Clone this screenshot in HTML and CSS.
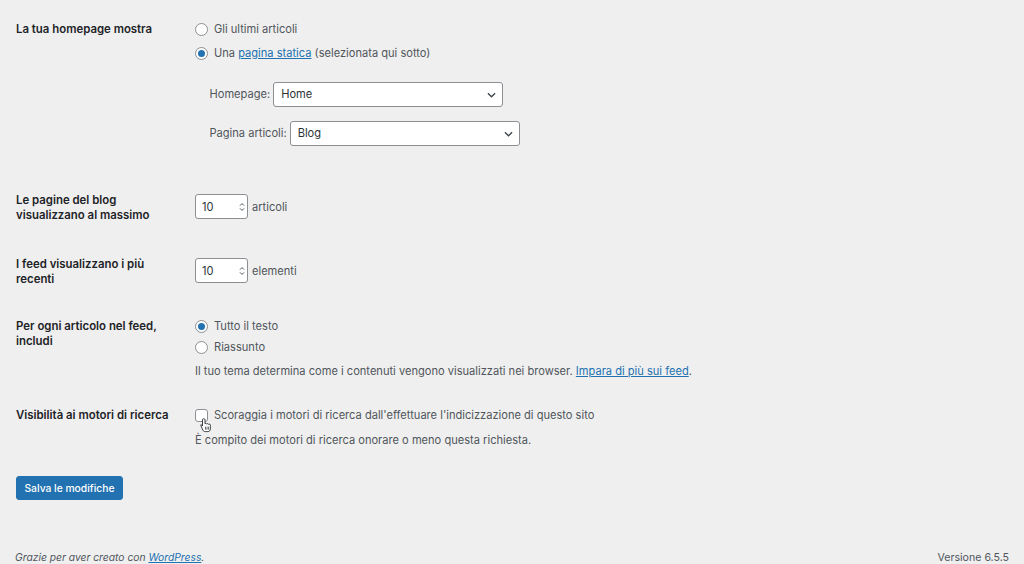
FILE: index.html
```html
<!DOCTYPE html>
<html lang="it">
<head>
  <meta charset="UTF-8" />
  <title>Impostazioni di lettura</title>
  <link rel="stylesheet" href="styles.css">
</head>
<body>
  <form class="settings">
    <div class="row row-home">
      <div class="row-label">La tua homepage mostra</div>
      <div class="row-field">
        <label class="choice"><span class="radio"></span>Gli ultimi articoli</label>
        <label class="choice"><span class="radio checked"></span><span>Una <a href="#">pagina statica</a> (selezionata qui sotto)</span></label>
        <div class="page-select">
          <label class="select-line">Homepage:
            <span class="select select-home">Home
              <svg class="chevron" viewBox="0 0 10 6"><path d="M1 1l4 4 4-4" /></svg>
            </span>
          </label>
          <label class="select-line">Pagina articoli:
            <span class="select select-blog">Blog
              <svg class="chevron" viewBox="0 0 10 6"><path d="M1 1l4 4 4-4" /></svg>
            </span>
          </label>
        </div>
      </div>
    </div>

    <div class="row row-blog">
      <div class="row-label">Le pagine del blog visualizzano al massimo</div>
      <div class="row-field number-line">
        <span class="number">10
          <svg class="spin" viewBox="0 0 6 10"><path d="M1 3.6l2-2 2 2M1 6.4l2 2 2-2" /></svg>
        </span>
        articoli
      </div>
    </div>

    <div class="row row-recent">
      <div class="row-label">I feed visualizzano i più recenti</div>
      <div class="row-field number-line">
        <span class="number">10
          <svg class="spin" viewBox="0 0 6 10"><path d="M1 3.6l2-2 2 2M1 6.4l2 2 2-2" /></svg>
        </span>
        elementi
      </div>
    </div>

    <div class="row row-feed">
      <div class="row-label">Per ogni articolo nel feed, includi</div>
      <div class="row-field">
        <label class="choice choice-tight"><span class="radio checked"></span>Tutto il testo</label>
        <label class="choice choice-tight"><span class="radio"></span>Riassunto</label>
        <p class="desc">Il tuo tema determina come i contenuti vengono visualizzati nei browser. <a href="#">Impara di più sui feed</a>.</p>
      </div>
    </div>

    <div class="row row-search">
      <div class="row-label">Visibilità ai motori di ricerca</div>
      <div class="row-field">
        <label class="choice choice-check">
          <span class="check">
            <svg class="cursor" viewBox="0 0 14 18"><path d="M4.2 1.6c-.8 0-1.3.6-1.3 1.3v7.2L1.9 9c-.6-.6-1.4-.6-1 .5l2.4 5.4c.5 1.1 1.4 1.8 2.8 1.8h3c1.800 0 3-1.300 3-3.200V9.200c0-.8-.5-1.300-1.200-1.300-.4 0-.7.1-1 .4-.2-.6-.6-.9-1.200-.9-.4 0-.8.2-1 .5-.2-.5-.6-.8-1.100-.8-.3 0-.6.1-.8.3V2.900c0-.7-.6-1.300-1.300-1.300z" /><path class="cursor-line" d="M6.400 11v3.400M8.200 11v3.400M10 11v3.400" /></svg>
          </span>
          Scoraggia i motori di ricerca dall'effettuare l'indicizzazione di questo sito
        </label>
        <p class="desc desc-search">È compito dei motori di ricerca onorare o meno questa richiesta.</p>
      </div>
    </div>

    <button class="save" type="button">Salva le modifiche</button>
  </form>

  <footer class="footer">
    <span class="thanks">Grazie per aver creato con <a href="#">WordPress</a>.</span>
    <span class="version">Versione 6.5.5</span>
  </footer>
</body>
</html>
```

FILE: styles.css
```css
* {
  box-sizing: border-box;
}
html, body {
  height: 100%;
}
body {
  margin: 0;
  background: #efefef;
  color: #50565c;
  font-family: Inter, "Liberation Sans", sans-serif;
  font-size: 11.1px;
  line-height: 15px;
  display: flex;
  flex-direction: column;
  overflow: hidden;
}
a {
  color: #2271b1;
}
.settings {
  flex: 1;
  padding: 22px 16px 0;
}
.row {
  display: grid;
  grid-template-columns: 179px 1fr;
}
.row-home {
  height: 171px;
}
.row-blog {
  height: 64px;
}
.row-recent {
  height: 62px;
}
.row-feed {
  height: 89px;
}
.row-search {
  height: 68px;
}
.row-label {
  color: #1d2327;
  font-size: 11.4px;
  font-weight: 600;
  width: 158px;
}
.choice {
  display: flex;
  align-items: center;
  gap: 6px;
  height: 15px;
  margin-bottom: 9px;
}
.choice-tight {
  margin-bottom: 6px;
}
.radio, .check {
  width: 13px;
  height: 13px;
  background: #fff;
  border: 1px solid #8c8f94;
  flex: none;
}
.radio {
  border-radius: 50%;
  position: relative;
}
.radio.checked::after {
  content: "";
  position: absolute;
  top: 2px;
  left: 2px;
  width: 7px;
  height: 7px;
  border-radius: 50%;
  background: #2271b1;
}
.check {
  border-radius: 3px;
  position: relative;
}
.cursor {
  position: absolute;
  top: 7px;
  left: 4px;
  width: 12px;
  height: 16px;
}
.cursor path {
  fill: #fff;
  stroke: #1d2327;
  stroke-width: 1;
}
.cursor .cursor-line {
  fill: none;
  stroke-width: .8;
}
.page-select {
  padding: 12px 0 0 14.5px;
}
.select-line {
  display: flex;
  align-items: center;
  gap: 3px;
  height: 25px;
  margin-bottom: 14px;
}
.select {
  height: 25px;
  background: #fff;
  border: 1px solid #8c8f94;
  border-radius: 3px;
  color: #2c3338;
  padding-left: 7px;
  display: flex;
  align-items: center;
  justify-content: space-between;
}
.select-home {
  width: 230px;
}
.select-blog {
  width: 230px;
}
.chevron {
  width: 9px;
  height: 6px;
  margin-right: 6px;
  fill: none;
  stroke: #3c434a;
  stroke-width: 1.400;
}
.number-line {
  display: flex;
  align-items: flex-start;
  gap: 4px;
  height: 25px;
  line-height: 27px;
  margin-top: 1px;
}
.number {
  width: 53px;
  height: 25px;
  background: #fff;
  border: 1px solid #8c8f94;
  border-radius: 3px;
  color: #2c3338;
  padding: 1px 0 0 6px;
  display: flex;
  align-items: center;
  justify-content: space-between;
  line-height: 15px;
}
.spin {
  width: 6px;
  height: 10px;
  margin-right: 2px;
  fill: none;
  stroke: #50575e;
  stroke-width: 1;
}
.desc {
  margin: 9px 0 0;
}
.desc-search {
  margin-top: 10px;
}
.save {
  display: block;
  width: 107px;
  height: 24px;
  padding: 0;
  background: #2271b1;
  border: 1px solid #2271b1;
  border-radius: 3px;
  color: #fff;
  font-family: inherit;
  font-size: 10.3px;
  font-weight: 500;
}
.footer {
  display: flex;
  justify-content: space-between;
  padding: 0 15px;
  height: 14px;
}
.thanks {
  font-size: 10.3px;
  font-style: italic;
}
.version {
  font-size: 10.6px;
}
```
